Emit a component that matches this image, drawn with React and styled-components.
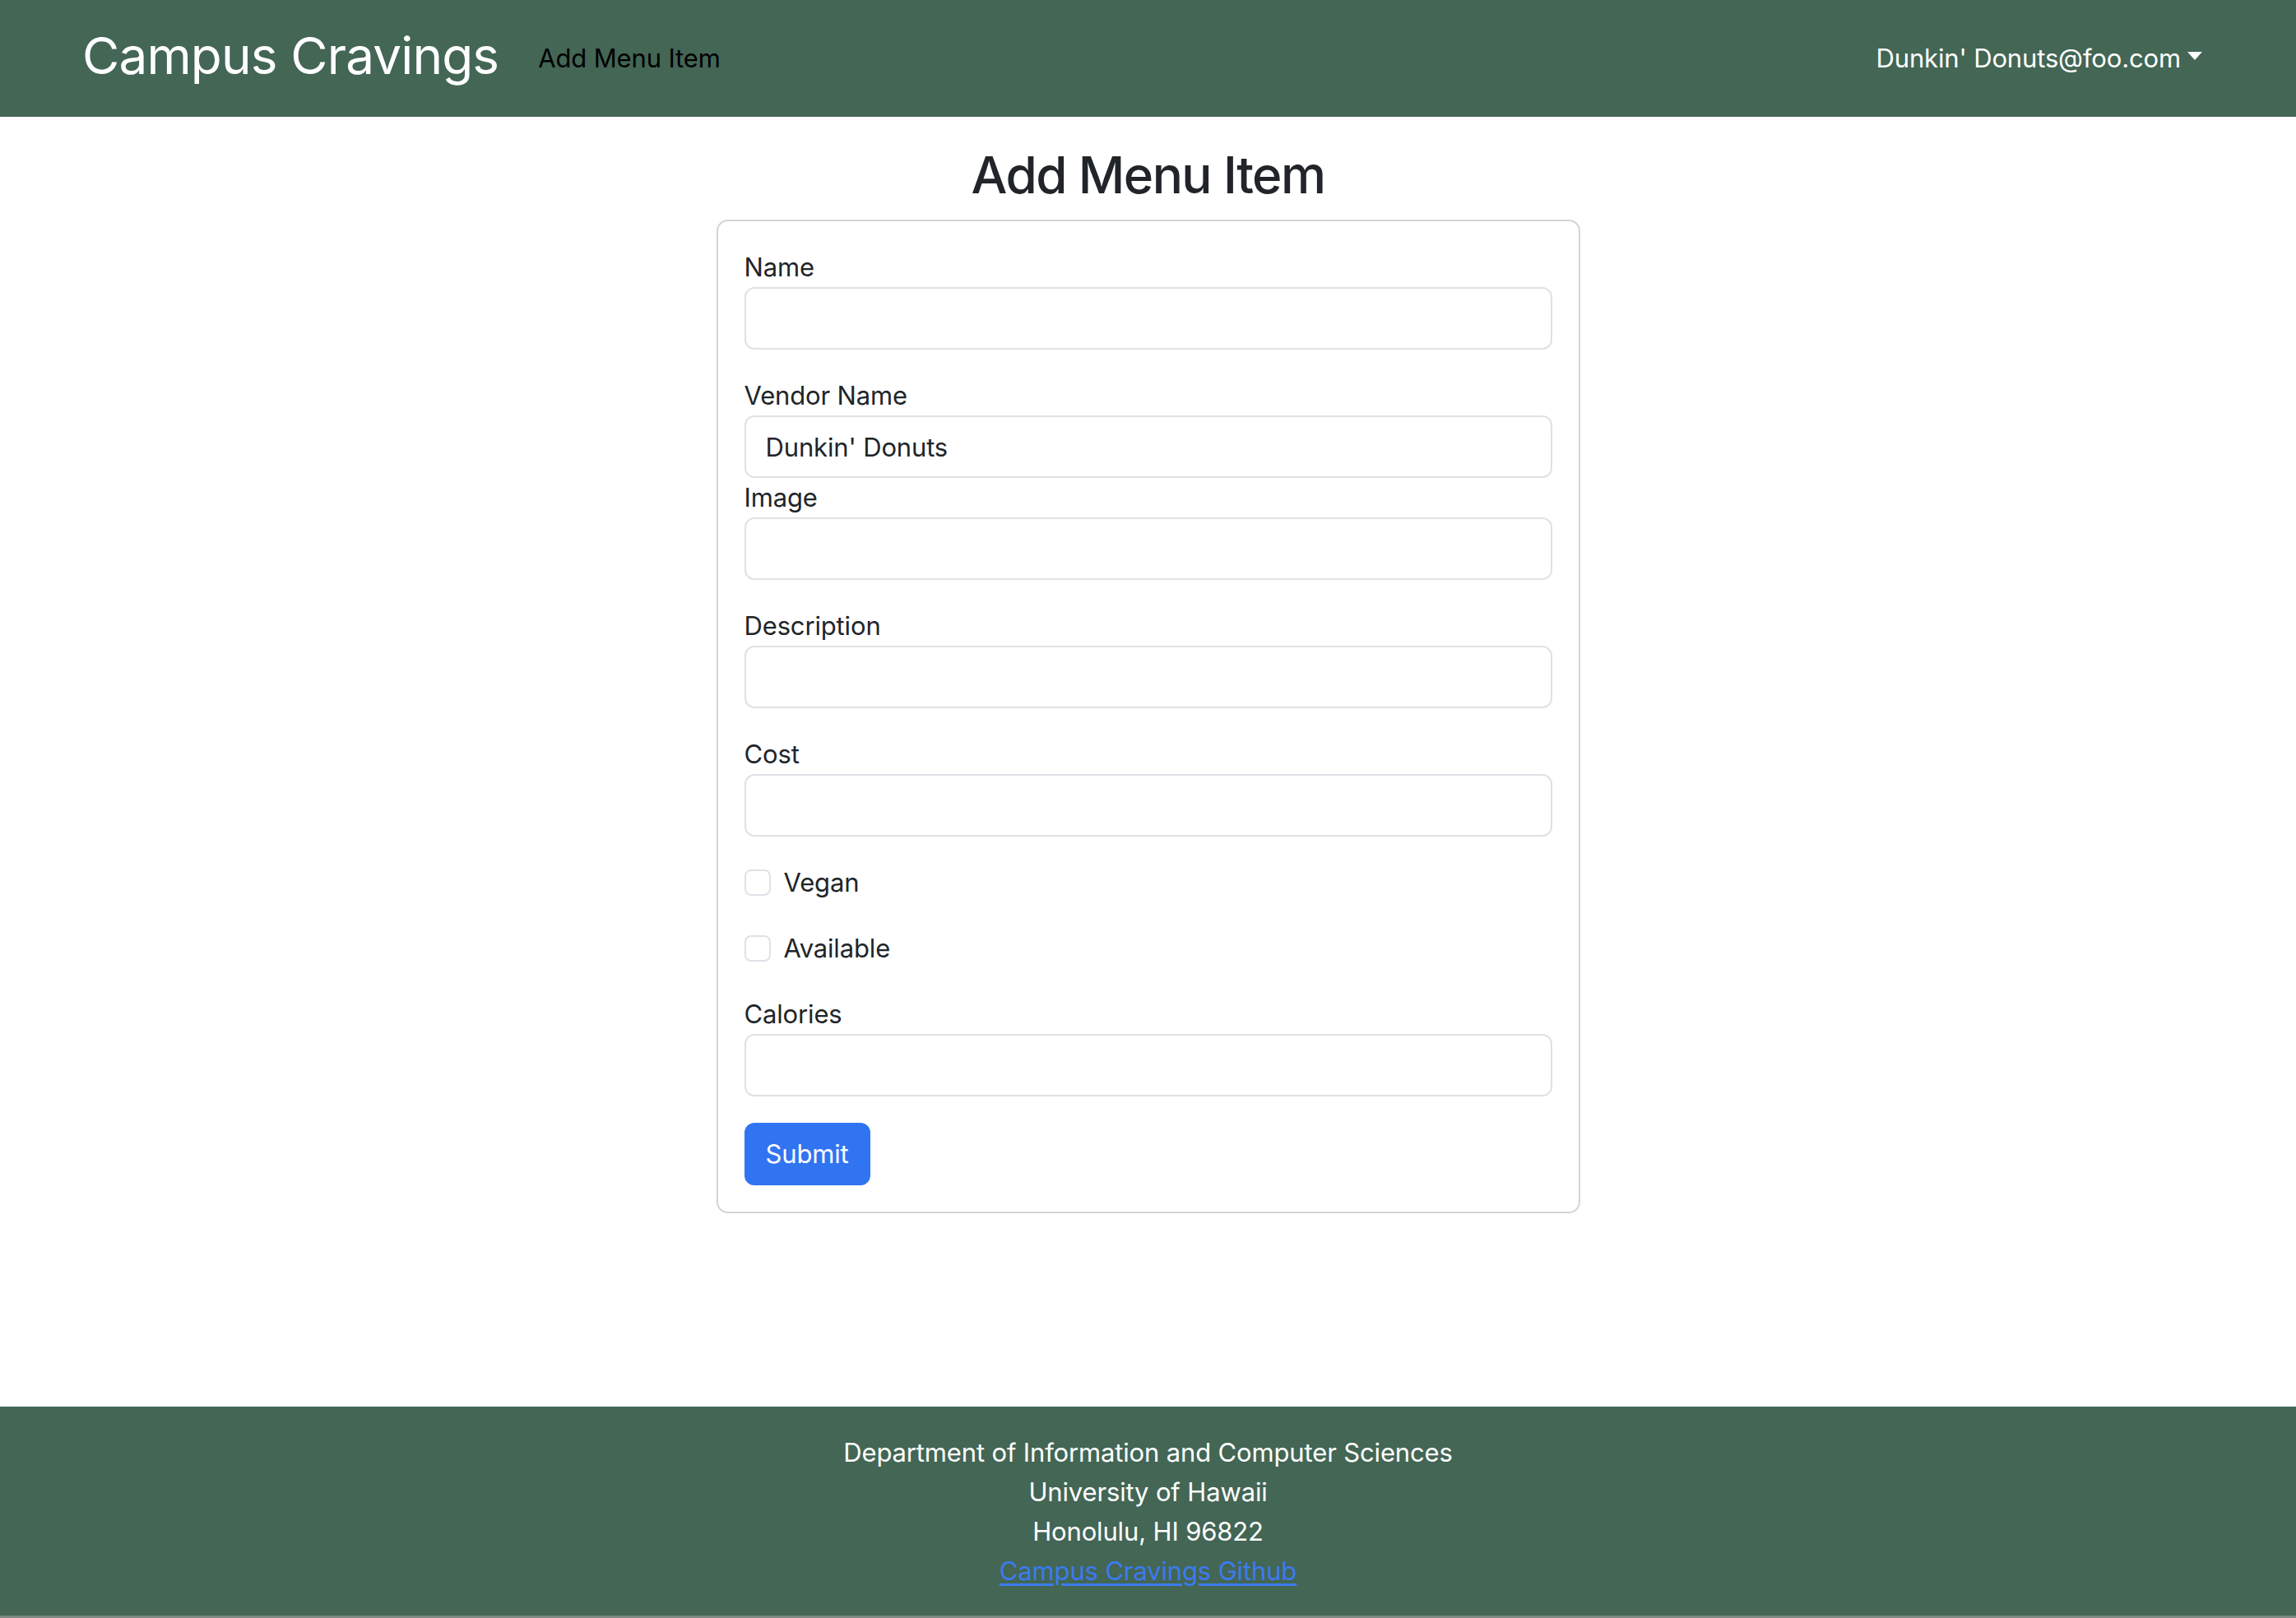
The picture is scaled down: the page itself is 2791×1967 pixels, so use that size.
import React from "react";
import styled, { createGlobalStyle, css } from "styled-components";

const GlobalStyle = createGlobalStyle`
  * { box-sizing: border-box; }
  html, body { margin: 0; padding: 0; }
  body {
    font-family: Inter, "Noto Sans", "Liberation Sans", sans-serif;
    color: #212529;
    background: #ffffff;
  }
`;

const bodyText = css`
  font-size: 31px;
  line-height: 48px;
  letter-spacing: -0.15px;
`;

const Page = styled.div`
  display: flex;
  flex-direction: column;
  min-height: 100vh;
`;

const Navbar = styled.nav`
  height: 142px;
  background: #436655;
  display: flex;
  align-items: center;
  padding: 0 98px 0 100px;
`;

const Brand = styled.a`
  font-size: 62px;
  line-height: 1.2;
  font-weight: 400;
  color: #ffffff;
  text-decoration: none;
  margin-right: 32px;
  letter-spacing: -0.85px;
  padding-bottom: 6px;
`;

const NavLink = styled.a`
  ${bodyText};
  color: ${(p) => (p.$light ? "#ffffff" : "#000000")};
  text-decoration: none;
  padding: 0 16px;
  display: inline-flex;
  align-items: center;
`;

const NavRight = styled.div`
  margin-left: auto;
  display: flex;
  align-items: center;
`;

const Caret = styled.span`
  display: inline-block;
  margin-left: 8px;
  width: 0;
  height: 0;
  border-top: 10px solid #ffffff;
  border-left: 9px solid transparent;
  border-right: 9px solid transparent;
  transform: translateY(-3px);
`;

const Main = styled.main`
  flex: 1;
  padding: 32px 0 64px;
`;

const Heading = styled.h2`
  margin: 0 0 16px;
  font-size: 62px;
  line-height: 77px;
  font-weight: 500;
  text-align: center;
  color: #212529;
  letter-spacing: -1.6px;
`;

const Card = styled.form`
  width: 1050px;
  margin: 0 auto;
  border: 2px solid #d4d4d4;
  border-radius: 14px;
  padding: 32px;
  background: #ffffff;
`;

const Field = styled.div`
  margin-bottom: ${(p) => (p.$tight ? "0" : "32px")};
`;

const Label = styled.label`
  display: block;
  ${bodyText};
  color: #212529;
`;

const Input = styled.input`
  display: block;
  width: 100%;
  height: 76px;
  padding: 12px 24px;
  font-family: inherit;
  ${bodyText};
  color: #212529;
  background: #ffffff;
  border: 2px solid #dee2e6;
  border-radius: 12px;
  outline: none;
`;

const CheckRow = styled.div`
  display: flex;
  align-items: flex-start;
  gap: 16px;
  margin-bottom: 32px;
`;

const CheckBox = styled.input.attrs({ type: "checkbox" })`
  appearance: none;
  -webkit-appearance: none;
  margin: 8px 0 0;
  width: 32px;
  height: 32px;
  border: 2px solid #dee2e6;
  border-radius: 8px;
  background: #ffffff;
  flex: none;
`;

const CheckLabel = styled.label`
  ${bodyText};
  color: #212529;
`;

const SubmitButton = styled.button`
  font-family: inherit;
  ${bodyText};
  padding: 12px 24px;
  color: #ffffff;
  background: #3174f1;
  border: 2px solid #3174f1;
  border-radius: 12px;
  cursor: pointer;
`;

const Footer = styled.footer`
  background: #436655;
  padding: 32px 0 30px;
  text-align: center;
  color: #ffffff;
  ${bodyText};
  border-bottom: 3px solid #7c8a82;
`;

const FooterLine = styled.div``;

const FooterLink = styled.a`
  color: #3b7bf0;
  text-decoration: underline;
  text-underline-offset: 4px;
`;

const fields = [
  { label: "Name", value: "" },
  { label: "Vendor Name", value: "Dunkin' Donuts", tight: true },
  { label: "Image", value: "" },
  { label: "Description", value: "" },
  { label: "Cost", value: "" },
];

export default function App() {
  return (
    <>
      <GlobalStyle />
      <Page>
        <Navbar>
          <Brand href="#">Campus Cravings</Brand>
          <NavLink href="#">Add Menu Item</NavLink>
          <NavRight>
            <NavLink href="#" $light>
              Dunkin' Donuts@foo.com
              <Caret />
            </NavLink>
          </NavRight>
        </Navbar>
        <Main>
          <Heading>Add Menu Item</Heading>
          <Card onSubmit={(e) => e.preventDefault()}>
            {fields.map((f) => (
              <Field key={f.label} $tight={f.tight}>
                <Label>{f.label}</Label>
                <Input type="text" defaultValue={f.value} />
              </Field>
            ))}
            <CheckRow>
              <CheckBox id="vegan" />
              <CheckLabel htmlFor="vegan">Vegan</CheckLabel>
            </CheckRow>
            <CheckRow>
              <CheckBox id="available" />
              <CheckLabel htmlFor="available">Available</CheckLabel>
            </CheckRow>
            <Field>
              <Label>Calories</Label>
              <Input type="text" />
            </Field>
            <SubmitButton type="submit">Submit</SubmitButton>
          </Card>
        </Main>
        <Footer>
          <FooterLine>Department of Information and Computer Sciences</FooterLine>
          <FooterLine>University of Hawaii</FooterLine>
          <FooterLine>Honolulu, HI 96822</FooterLine>
          <FooterLine>
            <FooterLink href="#">Campus Cravings Github</FooterLink>
          </FooterLine>
        </Footer>
      </Page>
    </>
  );
}
